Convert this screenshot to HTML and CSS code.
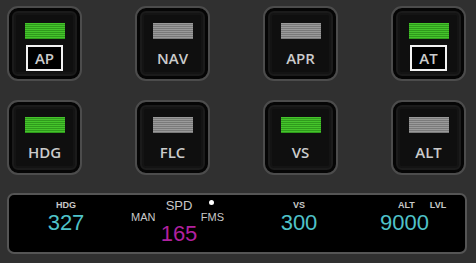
FILE: index.html
```html
<!DOCTYPE html>
<html lang="en">
<head>
  <meta charset="UTF-8" />
  <title>Autopilot Panel</title>
  <link rel="stylesheet" href="styles.css">
</head>
<body>
  <div id="panel">
    <div id="keys">
      <div class="key">
        <div class="lamp on"></div>
        <div class="label boxed">AP</div>
      </div>
      <div class="key">
        <div class="lamp"></div>
        <div class="label">NAV</div>
      </div>
      <div class="key">
        <div class="lamp"></div>
        <div class="label">APR</div>
      </div>
      <div class="key">
        <div class="lamp on"></div>
        <div class="label boxed">AT</div>
      </div>
      <div class="key">
        <div class="lamp on"></div>
        <div class="label">HDG</div>
      </div>
      <div class="key">
        <div class="lamp"></div>
        <div class="label">FLC</div>
      </div>
      <div class="key">
        <div class="lamp on"></div>
        <div class="label">VS</div>
      </div>
      <div class="key">
        <div class="lamp"></div>
        <div class="label">ALT</div>
      </div>
    </div>

    <div id="display">
      <div class="cell">
        <div class="tag">HDG</div>
        <div class="value">327</div>
      </div>
      <div class="cell spd">
        <div class="spd-title">SPD</div>
        <div class="spd-modes">
          <span>MAN</span>
          <span class="active">FMS</span>
        </div>
        <div class="value magenta">165</div>
      </div>
      <div class="cell">
        <div class="tag">VS</div>
        <div class="value">300</div>
      </div>
      <div class="cell alt">
        <div class="alt-tags">
          <span class="tag">ALT</span>
          <span class="tag">LVL</span>
        </div>
        <div class="value">9000</div>
      </div>
    </div>
  </div>
</body>
</html>
```

FILE: styles.css
```css
body {
  margin: 0;
  background-color: #303030;
  font-family: "Liberation Sans", Arial, sans-serif;
  overflow: hidden;
}
#panel {
  padding: 6px 0 0 7px;
}
#keys {
  display: grid;
  grid-template-columns: repeat(4, 75px);
  grid-auto-rows: 75px;
  column-gap: 53px;
  row-gap: 19px;
}
.key {
  box-sizing: border-box;
  border: 2px solid #4c4c4c;
  border-radius: 11px;
  background: #0f0f0f;
  box-shadow: inset 0 0 0 3px #050505, inset 0 0 0 5px #1b1b1b, inset 0 0 0 7px #141414;
  display: flex;
  flex-direction: column;
  align-items: center;
  padding-top: 15px;
}
.lamp {
  width: 40px;
  height: 16px;
  background: repeating-linear-gradient(to bottom, #9a9a9a 0, #9a9a9a 1px, #7a7a7a 1px, #7a7a7a 2px);
}
.lamp.on {
  background: repeating-linear-gradient(to bottom, #45c42b 0, #45c42b 1px, #2f9a1c 1px, #2f9a1c 2px);
}
.label {
  box-sizing: border-box;
  margin-top: 6px;
  height: 26px;
  width: 37px;
  display: flex;
  align-items: center;
  justify-content: center;
  color: #cbcbcb;
  font-family: "Open Sans", "Liberation Sans", sans-serif;
  font-size: 15px;
  font-weight: 600;
}
.label.boxed {
  border: 2px solid #f2f2f2;
  background: #000;
}
#display {
  box-sizing: border-box;
  margin-top: 18px;
  width: 460px;
  height: 61px;
  border: 2px solid #555;
  border-radius: 7px;
  background: #000;
  display: grid;
  grid-template-columns: 114px 112px 128px 1fr;
  padding-top: 5px;
}
.cell {
  display: flex;
  flex-direction: column;
  align-items: center;
}
.tag {
  color: #c8c8c8;
  font-size: 9px;
  font-weight: bold;
  line-height: 10px;
}
.value {
  color: #4fc2c9;
  font-size: 22px;
  line-height: 22px;
  margin-top: 2px;
}
.value.magenta {
  color: #b1219f;
  margin-top: 0;
}
.spd {
  margin-top: -1px;
}
.spd-title {
  color: #c8c8c8;
  font-size: 13px;
  line-height: 13px;
}
.spd-modes {
  box-sizing: border-box;
  width: 100%;
  display: flex;
  justify-content: space-between;
  padding: 0 11px 0 8px;
  color: #c8c8c8;
  font-size: 11px;
  line-height: 11px;
}
.spd-modes .active {
  position: relative;
}
.spd-modes .active::before {
  content: "";
  position: absolute;
  left: 50%;
  top: -12px;
  width: 5px;
  height: 5px;
  margin-left: -3px;
  border-radius: 50%;
  background: #fff;
}
.alt {
  align-items: flex-start;
  padding-left: 17px;
}
.alt-tags {
  display: flex;
  gap: 15px;
  margin-left: 18px;
}
```
